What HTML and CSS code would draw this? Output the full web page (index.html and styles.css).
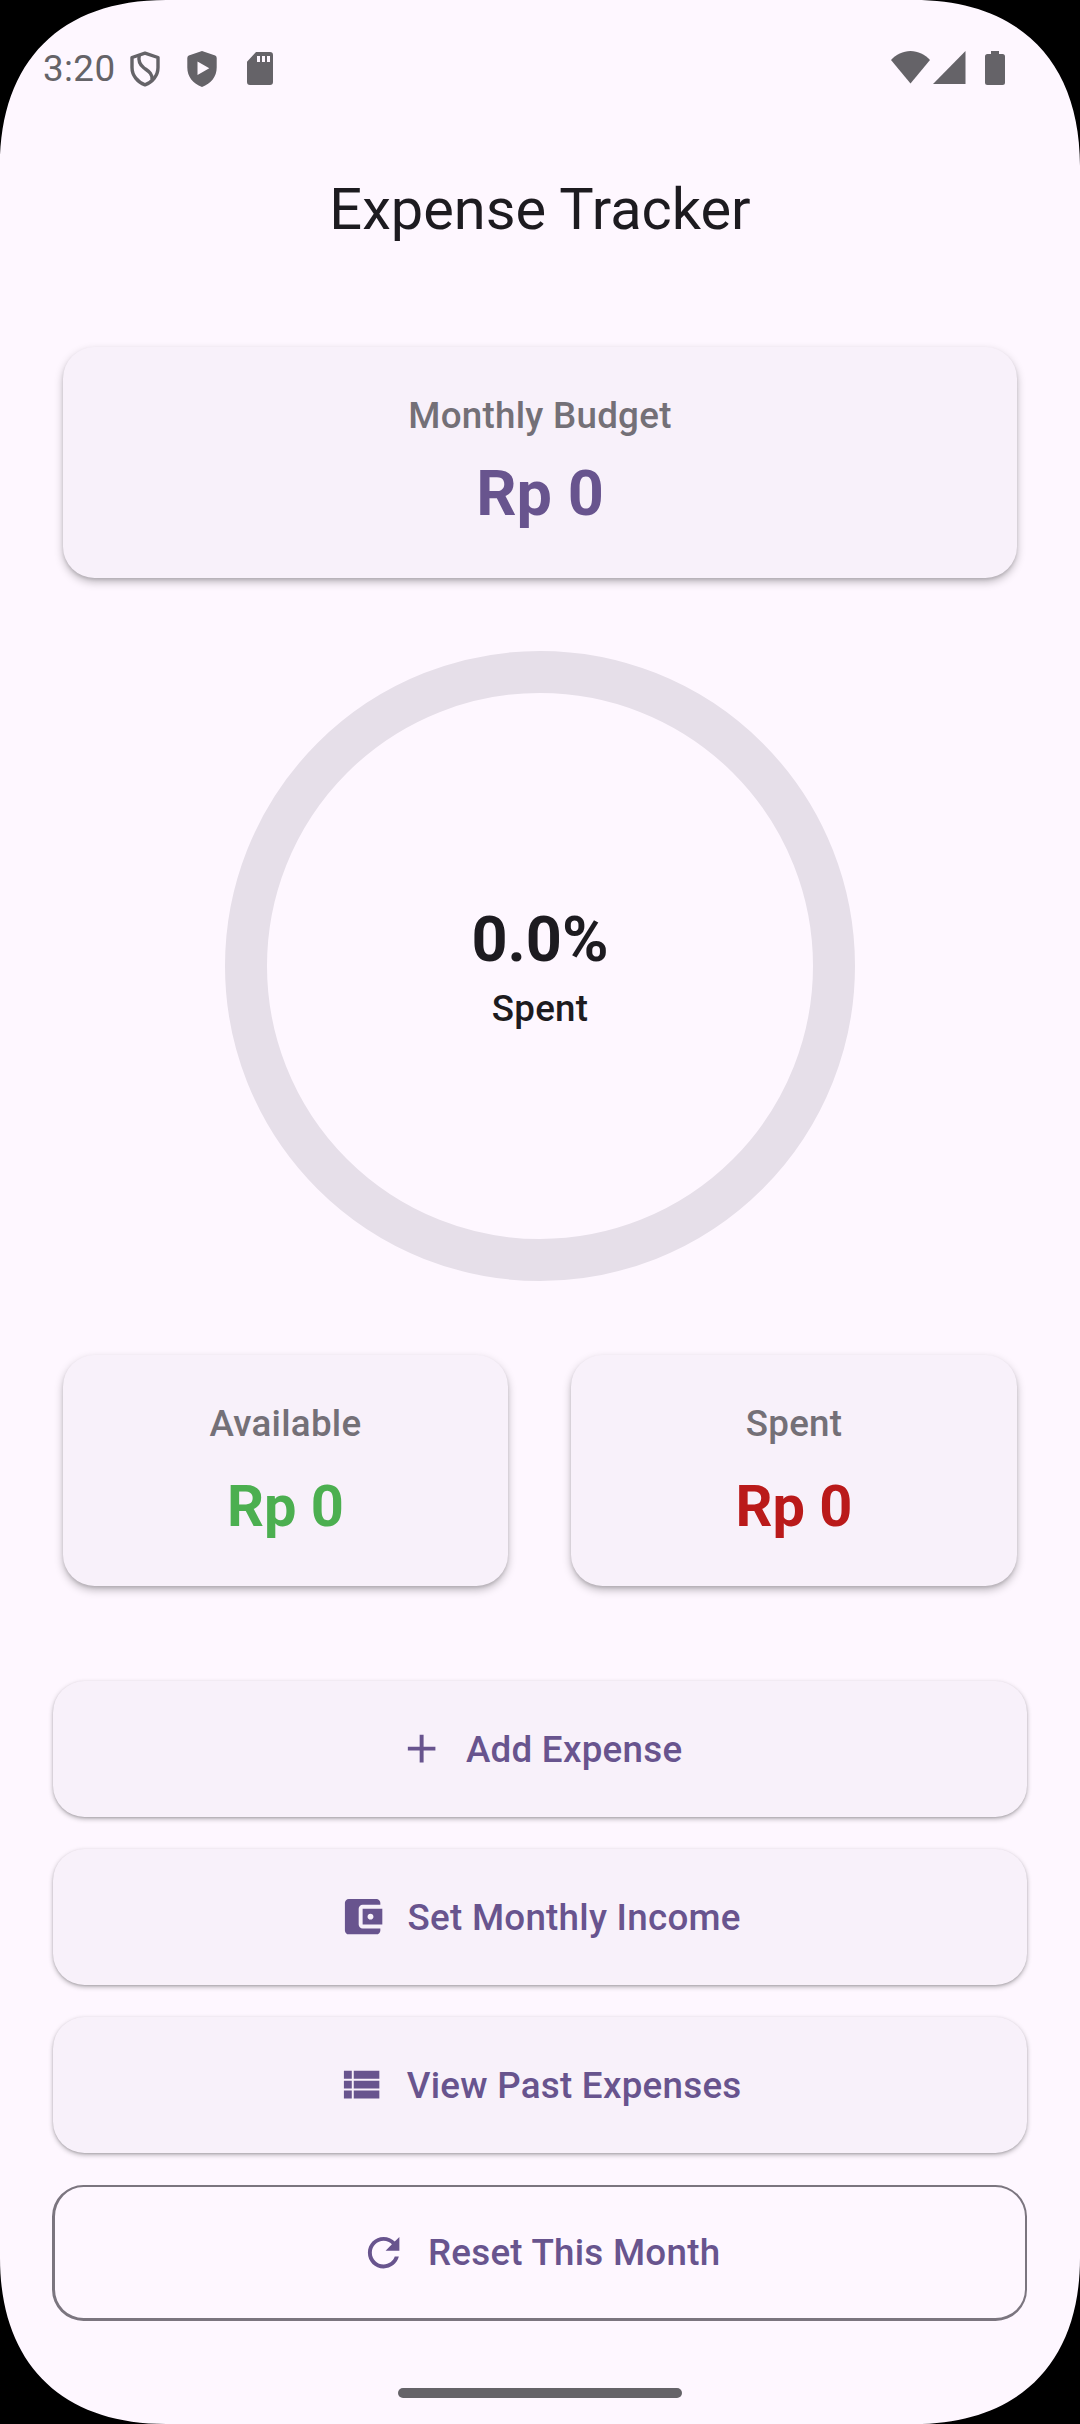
FILE: index.html
```html
<!DOCTYPE html>
<html lang="en">
<head>
<meta charset="utf-8">
<title>Expense Tracker</title>
<link rel="stylesheet" href="styles.css">
</head>
<body>
<div class="screen">
  <header class="status-bar">
    <span class="time">3:20</span>
    <svg class="st-shield" width="30" height="36" viewBox="0 0 30 36" fill="none" stroke="currentColor" stroke-width="3.4" stroke-linejoin="round"><path d="M15 2.1 2 6.500v10c0 8 5.500 14.500 13 17.300 7.500-2.800 13-9.300 13-17.300v-10z"/><path d="M9.300 4C8 10 10 14 14 17S22.500 22 22 28.500"/></svg>
    <svg class="st-play" width="30" height="36" viewBox="0 0 30 36" fill="currentColor"><path fill-rule="evenodd" d="M15 0 1.800 4.600Q.3 5.200.3 7v9.500C.3 25.500 6 32.800 15 36c9-3.200 14.700-10.500 14.700-19.500V7q0-1.800-1.500-2.400zM10.500 10.500v13.500L22.300 17.300z"/></svg>
    <svg class="st-sd" width="26" height="33" viewBox="0 0 26 33" fill="currentColor"><path fill-rule="evenodd" d="M9 0h14a3 3 0 0 1 3 3v27a3 3 0 0 1-3 3H3a3 3 0 0 1-3-3V9.800zM10 4v6h3V4zM15 4v6h3V4zM20 4v6h3V4z"/></svg>
    <span class="spacer"></span>
    <svg class="st-wifi" width="39" height="33" viewBox="0 0 39 33" fill="currentColor"><path d="M19.500 32.500 0 9C5 3.500 12 0 19.500 0S34 3.500 39 9z"/></svg>
    <svg class="st-signal" width="33" height="33" viewBox="0 0 33 33" fill="currentColor"><path d="M0 33 32.500 0v33z"/></svg>
    <svg class="st-battery" width="20" height="34" viewBox="0 0 20 34" fill="currentColor"><path d="M6 0h8v3h3.500A2.500 2.500 0 0 1 20 5.500v26a2.500 2.500 0 0 1-2.500 2.500h-15A2.500 2.500 0 0 1 0 31.500v-26A2.500 2.500 0 0 1 2.500 3H6z"/></svg>
  </header>

  <h1 class="app-title">Expense Tracker</h1>

  <main class="content">
    <section class="card budget">
      <div class="label">Monthly Budget</div>
      <div class="amount large">Rp 0</div>
    </section>

    <section class="ring">
      <div class="percent">0.0%</div>
      <div class="label strong">Spent</div>
    </section>

    <section class="summary">
      <div class="card">
        <div class="label">Available</div>
        <div class="amount available">Rp 0</div>
      </div>
      <div class="card">
        <div class="label">Spent</div>
        <div class="amount spent">Rp 0</div>
      </div>
    </section>

    <nav class="actions">
      <button class="btn"><svg class="icon" viewBox="0 0 24 24"><path d="M19 13h-6v6h-2v-6H5v-2h6V5h2v6h6v2z"/></svg><span>Add Expense</span></button>
      <button class="btn"><svg class="icon" viewBox="0 0 24 24"><path d="M21 18v1c0 1.100-.9 2-2 2H5c-1.110 0-2-.9-2-2V5c0-1.100.89-2 2-2h14c1.100 0 2 .9 2 2v1h-9c-1.110 0-2 .9-2 2v8c0 1.100.89 2 2 2h9zm-9-2h10V8H12v8zm4-2.500c-.83 0-1.500-.67-1.500-1.500s.67-1.500 1.500-1.500 1.500.67 1.500 1.500-.67 1.500-1.500 1.500z"/></svg><span>Set Monthly Income</span></button>
      <button class="btn"><svg class="icon" viewBox="0 0 24 24"><path d="M3 14h4v-4H3v4zm0 5h4v-4H3v4zM3 9h4V5H3v4zm5 5h13v-4H8v4zm0 5h13v-4H8v4zM8 5v4h13V5H8z"/></svg><span>View Past Expenses</span></button>
      <button class="btn outlined"><svg class="icon" viewBox="0 0 24 24"><path d="M17.650 6.350C16.200 4.900 14.210 4 12 4c-4.420 0-7.990 3.580-7.990 8s3.570 8 7.990 8c3.730 0 6.840-2.550 7.730-6h-2.080c-.82 2.330-3.040 4-5.650 4-3.310 0-6-2.690-6-6s2.690-6 6-6c1.660 0 3.140.69 4.220 1.780L13 11h7V4l-2.350 2.350z"/></svg><span>Reset This Month</span></button>
    </nav>
  </main>

  <div class="home-handle"></div>

  <svg class="corner tl" viewBox="0 0 166 166"><path d="M0 166C0 61 61 0 166 0H0z"/></svg>
  <svg class="corner tr" viewBox="0 0 166 166"><path d="M0 166C0 61 61 0 166 0H0z"/></svg>
  <svg class="corner bl" viewBox="0 0 166 166"><path d="M0 166C0 61 61 0 166 0H0z"/></svg>
  <svg class="corner br" viewBox="0 0 166 166"><path d="M0 166C0 61 61 0 166 0H0z"/></svg>
</div>
</body>
</html>
```
FILE: styles.css
```css
* { box-sizing: border-box; }

body {
  margin: 0;
  background: #000;
  font-family: Roboto, "Noto Sans", sans-serif;
}

.screen {
  position: relative;
  display: flex;
  flex-direction: column;
  width: 1080px;
  height: 2424px;
  overflow: hidden;
  background: #fef7ff;
  color: #1d1b20;
}

/* Status bar */
.status-bar {
  display: flex;
  align-items: flex-start;
  height: 137px;
  padding: 51px 75px 0 43px;
  color: #656368;
}
.time {
  width: 87px;
  margin-top: -4px;
  font-size: 36.75px;
  font-weight: 400;
  line-height: 43px;
  letter-spacing: 0.4px;
}
.st-play { margin-left: 27px; }
.st-sd { margin: 1px 0 0 30px; }
.spacer { flex: 1; }
.st-signal { margin-left: 3px; }
.st-battery { margin-left: 19px; }

.app-title {
  margin: 0;
  height: 147px;
  font-size: 57.75px;
  font-weight: 400;
  line-height: 144px;
  text-align: center;
}

.content {
  display: flex;
  flex-direction: column;
  padding: 63px 52px 0;
}

/* Cards */
.card {
  flex: none;
  height: 231px;
  padding-top: 42px;
  border-radius: 31.5px;
  background: #f8f1fa;
  box-shadow: 0 4px 8px rgba(0, 0, 0, 0.26), 0 2px 3px rgba(0, 0, 0, 0.1);
  text-align: center;
}
.budget {
  margin: 0 11px;
}
.label {
  color: #747077;
  font-size: 36.75px;
  font-weight: 500;
  line-height: 54px;
  letter-spacing: 0.26px;
}
.label.strong { color: #1d1b20; }
.amount {
  margin-top: 18px;
  font-size: 57.75px;
  font-weight: 700;
  line-height: 74px;
}
.amount.large {
  margin-top: 9px;
  font-size: 63px;
  line-height: 84px;
  color: #68548e;
}
.available { color: #4caf50; }
.spent { color: #ba1a1a; }

/* Progress ring */
.ring {
  display: flex;
  flex-direction: column;
  align-items: center;
  justify-content: center;
  align-self: center;
  width: 630px;
  height: 630px;
  margin: 73px 0 74px;
  padding-top: 2px;
  border: 42px solid #e6dfe9;
  border-radius: 50%;
}
.percent {
  font-size: 63px;
  font-weight: 700;
  line-height: 84px;
}

.summary {
  display: grid;
  grid-template-columns: 445px 446px;
  gap: 63px;
  margin: 0 11px;
}

/* Buttons */
.actions {
  display: flex;
  flex-direction: column;
  gap: 32px;
  margin-top: 95px;
}
.btn {
  display: flex;
  align-items: center;
  justify-content: center;
  gap: 21px;
  height: 136px;
  margin: 0 1px;
  padding: 0;
  border: 0;
  border-radius: 31.5px;
  background: #f8f1fa;
  box-shadow: 0 2px 5px rgba(0, 0, 0, 0.28), 0 1px 2px rgba(0, 0, 0, 0.12);
  color: #68548e;
  font: 500 36.75px/52px Roboto, "Noto Sans", sans-serif;
  letter-spacing: 0.26px;
}
.btn span { padding-top: 1px; }
.btn.outlined {
  margin: 0 1px 0 0;
  border: 3px solid #7b757f;
  border-top-width: 2px;
  border-right-width: 2px;
  background: transparent;
  box-shadow: none;
}
.icon {
  width: 47.25px;
  height: 47.25px;
  fill: currentColor;
}

.home-handle {
  width: 284px;
  height: 10px;
  margin: 67px auto 0;
  border-radius: 5px;
  background: #656368;
}

/* Rounded display corners lie over the screen */
.corner {
  position: absolute;
  width: 166px;
  height: 166px;
}
.tl { top: 0; left: 0; }
.tr { top: 0; right: 0; transform: scaleX(-1); }
.bl { bottom: 0; left: 0; transform: scaleY(-1); }
.br { bottom: 0; right: 0; transform: scale(-1); }
```
